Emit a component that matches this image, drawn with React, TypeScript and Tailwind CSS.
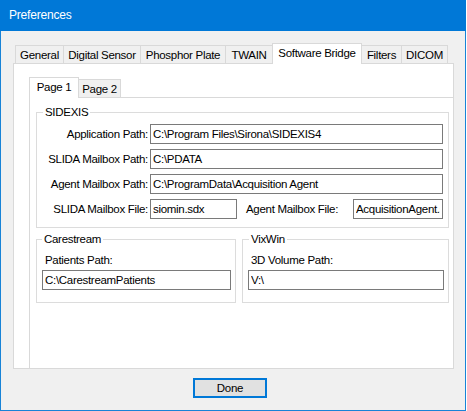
import React from 'react';

const outerTabs = [
  { label: 'General', width: 'w-[49px]' },
  { label: 'Digital Sensor', width: 'w-[78px]' },
  { label: 'Phosphor Plate', width: 'w-[86px]' },
  { label: 'TWAIN', width: 'w-[48px]' },
  { label: 'Software Bridge', width: 'w-[90px]', active: true },
  { label: 'Filters', width: 'w-[41px]' },
  { label: 'DICOM', width: 'w-[47px]' },
];

const innerTabs = [
  { label: 'Page 1', width: 'w-[50px]', active: true },
  { label: 'Page 2', width: 'w-[43px]' },
];

type Tab = { label: string; width: string; active?: boolean };

const TabStrip: React.FC<{ tabs: Tab[]; className?: string }> = ({ tabs, className = '' }) => (
  <div className={`flex items-end h-[20px] ${className}`}>
    {tabs.map((tab) =>
      tab.active ? (
        <div
          key={tab.label}
          className={`${tab.width} h-[21px] -mb-px -mr-px relative z-10 flex items-center justify-center pb-[2px] bg-white border border-b-0 border-[#d9d9d9] whitespace-nowrap`}
        >
          {tab.label}
        </div>
      ) : (
        <div
          key={tab.label}
          className={`${tab.width} h-[18px] -mr-px flex items-center justify-center bg-[#f0f0f0] border border-b-0 border-[#d9d9d9] whitespace-nowrap`}
        >
          {tab.label}
        </div>
      )
    )}
  </div>
);

const TextBox: React.FC<{ value: string; className?: string }> = ({ value, className = '' }) => (
  <input
    readOnly
    value={value}
    className={`h-[20px] border border-[#7a7a7a] bg-white px-[2px] leading-[18px] outline-none ${className}`}
  />
);

const PathRow: React.FC<{ label: string; value: string }> = ({ label, value }) => (
  <div className="flex items-center h-[20px]">
    <span className="w-[111px] text-right whitespace-nowrap">{label}</span>
    <TextBox value={value} className="ml-[2px] w-[293px]" />
  </div>
);

export default function App() {
  return (
    <div className="w-[467px] h-[411px] bg-white font-['Liberation_Sans',Arial,sans-serif] text-[11.5px] tracking-[-0.3px] leading-[16px] text-black">
      <div className="w-[466px] h-[411px] flex flex-col">
        {/* title bar */}
        <div className="h-[31px] bg-[#0078d7] text-white text-[12px] tracking-[-0.2px] flex items-center pl-[9px] pb-[1px]">Preferences</div>

        <div className="flex-1 flex flex-col bg-[#f0f0f0] border-x border-b border-[#1883d7] pl-[12px] pt-[12px]">
          {/* outer tab control */}
          <TabStrip tabs={outerTabs} className="pl-[2px]" />
          <div className="w-[441px] h-[306px] bg-white border border-[#d9d9d9] overflow-hidden flex flex-col pl-[15px] pt-[13px]">
            <TabStrip tabs={innerTabs} />
            <div className="flex-1 w-[440px] border-l border-t border-[#d9d9d9] pl-[6px] pt-[6px]">
              <fieldset className="w-[413px] border border-[#dcdcdc]">
                <legend className="ml-[6px] px-[2px]">SIDEXIS</legend>
                <div className="flex flex-col gap-[5px] pt-[4px] pb-[8px]">
                  <PathRow label="Application Path:" value="C:\Program Files\Sirona\SIDEXIS4" />
                  <PathRow label="SLIDA Mailbox Path:" value="C:\PDATA" />
                  <PathRow label="Agent Mailbox Path:" value="C:\ProgramData\Acquisition Agent" />
                  <div className="flex items-center h-[20px]">
                    <span className="w-[111px] text-right whitespace-nowrap">SLIDA Mailbox File:</span>
                    <TextBox value="siomin.sdx" className="ml-[2px] w-[87px]" />
                    <span className="ml-[9px] w-[107px] whitespace-nowrap">Agent Mailbox File:</span>
                    <TextBox value="AcquisitionAgent.sdx" className="w-[90px]" />
                  </div>
                </div>
              </fieldset>

              <div className="flex gap-[6px] mt-[3px]">
                <fieldset className="w-[200px] border border-[#dcdcdc] pl-[5px] pr-[4px]">
                  <legend className="ml-[0px] px-[2px]">Carestream</legend>
                  <div className="flex flex-col pt-[5px] pb-[12px]">
                    <span className="ml-[3px]">Patients Path:</span>
                    <TextBox value="C:\CarestreamPatients" className="mt-[2px] w-full" />
                  </div>
                </fieldset>
                <fieldset className="w-[207px] border border-[#dcdcdc] pl-[5px] pr-[4px]">
                  <legend className="ml-[1px] px-[2px]">VixWin</legend>
                  <div className="flex flex-col pt-[5px] pb-[12px]">
                    <span className="ml-[3px]">3D Volume Path:</span>
                    <TextBox value="V:\" className="mt-[2px] w-full" />
                  </div>
                </fieldset>
              </div>
            </div>
          </div>

          {/* footer */}
          <div className="pt-[9px] pl-[180px]">
            <button className="w-[74px] h-[20px] bg-[#e1e1e1] border-2 border-[#0078d7] flex items-center justify-center">
              Done
            </button>
          </div>
        </div>
      </div>
    </div>
  );
}
